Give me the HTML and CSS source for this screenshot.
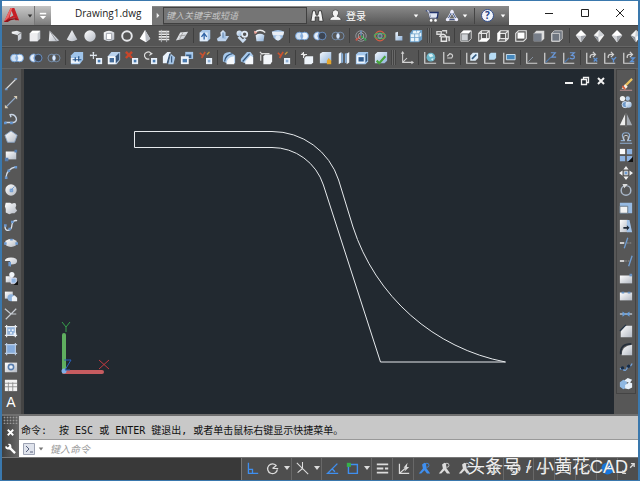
FILE: index.html
```html
<!DOCTYPE html>
<html lang="zh-CN">
<head>
<meta charset="utf-8">
<meta name="viewport" content="width=device-width, initial-scale=1">
<title>Drawing1.dwg</title>
<link rel="stylesheet" href="styles.css">
</head>
<body>
<svg class="sprite" aria-hidden="true">
  <defs>
    <linearGradient id="g" x1="0" y1="0" x2="1" y2="1"><stop offset="0" stop-color="#fff"/><stop offset="1" stop-color="#b4bac4"/></linearGradient>
    <linearGradient id="gb" x1="0" y1="0" x2="1" y2="1"><stop offset="0" stop-color="#f2f7fc"/><stop offset="1" stop-color="#8eb2da"/></linearGradient>
  </defs>
  <symbol id="polysolid" viewBox="0 0 16 16"><path d="M2 3l6-1 5 2v7l-4 3V7L2 5z" fill="url(#g)"/><path d="M9 7l4-3" stroke="#777"/></symbol>
  <symbol id="box" viewBox="0 0 16 16"><path d="M2 5l3-3h9v9l-3 3H2z" fill="#c3c7cd"/><path d="M2 5h9v9H2z" fill="#ededf0"/><path d="M2 5l3-3h9l-3 3z" fill="#fff"/></symbol>
  <symbol id="wedge" viewBox="0 0 16 16"><path d="M3 2l11 11-3 1H2z" fill="url(#g)"/><path d="M3 2l8 12" stroke="#8a8d92"/></symbol>
  <symbol id="cone" viewBox="0 0 16 16"><path d="M8 1l6 11q-6 4-12 0z" fill="url(#g)"/></symbol>
  <symbol id="sphere" viewBox="0 0 16 16"><circle cx="8" cy="8" r="6.5" fill="url(#g)"/></symbol>
  <symbol id="cyl" viewBox="0 0 16 16"><path d="M2 4q6-4 12 0v8q-6 4-12 0z" fill="url(#g)"/><path d="M5 5h6v7H5z" fill="#fff" stroke="#989ca5"/></symbol>
  <symbol id="torus" viewBox="0 0 16 16"><circle cx="8" cy="8" r="5.5" fill="none" stroke="#e6e8eb" stroke-width="2.2"/></symbol>
  <symbol id="pyramid" viewBox="0 0 16 16"><path d="M8 1l6 10-5 4-7-4z" fill="#fff"/><path d="M8 1l6 10-5 4z" fill="#b9bdc4"/></symbol>
  <symbol id="helix" viewBox="0 0 16 16"><path d="M2 3h12M2 6h12M2 9h12M2 12h12" stroke="#e8e8e8" stroke-width="1.8"/><path d="M5 1v14M11 2v13" stroke="#b7babf"/></symbol>
  <symbol id="plane" viewBox="0 0 16 16"><path d="M6 4l9-1-5 8-9 2z" fill="url(#g)"/><path d="M5 8l7-1M9 4l-4 8" stroke="#999"/></symbol>
  <symbol id="extrude" viewBox="0 0 16 16"><path d="M2 4l3-3h9v10l-3 3H2z" fill="#a9c7e8"/><path d="M2 4h9v10H2z" fill="#e0ecf9"/><path d="M7 12V6M4 9l3-4 3 4" stroke="#2e62a5" stroke-width="1.5" fill="none"/></symbol>
  <symbol id="presspull" viewBox="0 0 16 16"><path d="M1 11l4-3h10l-4 6H2z" fill="#bcd2ec"/><path d="M5 4l3-3 3 3v7H6z" fill="url(#gb)"/><path d="M8 10V4" stroke="#426c9e"/></symbol>
  <symbol id="sweep" viewBox="0 0 16 16"><circle cx="5" cy="5" r="3.2" fill="url(#gb)"/><circle cx="11" cy="6" r="3" fill="none" stroke="#e0eaf5" stroke-width="2"/><path d="M4 9l5 5 3-3" fill="none" stroke="#c9dbef" stroke-width="3"/></symbol>
  <symbol id="revolve" viewBox="0 0 16 16"><path d="M2 4q6-5 12 0" fill="none" stroke="#ececec" stroke-width="1.6"/><path d="M3 7q5-3 10 0l-1 7H4z" fill="url(#gb)"/><path d="M1 2l1 4 3-2" fill="#f2a59a"/></symbol>
  <symbol id="loft" viewBox="0 0 16 16"><path d="M1 3q7-4 14 0l-2 7q-5 6-10 0z" fill="#9ebfe3"/><path d="M1 3h14l-1 4H2z" fill="#e9eef5"/><circle cx="8" cy="10" r="3" fill="#dfeaf6"/></symbol>
  <symbol id="union" viewBox="0 0 16 16"><circle cx="5" cy="8" r="4.4" fill="#cfe0f3" stroke="#6da0dc"/><circle cx="11" cy="8" r="4.4" fill="#eff5fb" stroke="#6da0dc"/><path d="M8 5q-3 3 0 6 3-3 0-6" fill="#89aedb"/></symbol>
  <symbol id="subtract" viewBox="0 0 16 16"><circle cx="10.500" cy="8" r="4.400" fill="#3d4552" stroke="#6b95cb"/><path d="M7 3.800a4.500 4.500 0 1 0 0 8.400q-3-4 0-8.400" fill="#e4edf8" stroke="#7aa7e0"/></symbol>
  <symbol id="intersect" viewBox="0 0 16 16"><circle cx="5.500" cy="8" r="4.400" fill="none" stroke="#7893b6"/><circle cx="10.500" cy="8" r="4.400" fill="none" stroke="#7893b6"/><path d="M8 4.500q-3.500 3.500 0 7 3.500-3.500 0-7" fill="#dcebff"/></symbol>
  <symbol id="move3d" viewBox="0 0 16 16"><circle cx="8" cy="8" r="6" fill="none" stroke="#989da4"/><path d="M8 8V2" stroke="#6292ce" stroke-width="1.5"/><path d="M8 8l-6 5" stroke="#c95449" stroke-width="2"/><path d="M8 8l6 5" stroke="#38a153" stroke-width="2"/><path d="M5 6l3-2 3 2v4l-3 2-3-2z" fill="none" stroke="#aaa"/></symbol>
  <symbol id="rotate3d" viewBox="0 0 16 16"><circle cx="8" cy="8" r="5.500" fill="none" stroke="#d95b43" stroke-width="1.500"/><ellipse cx="8" cy="8" rx="6.500" ry="3" fill="none" stroke="#53a75f" stroke-width="1.300"/><circle cx="8" cy="8" r="2.400" fill="#526274" stroke="#94aac0"/></symbol>
  <symbol id="lshape" viewBox="0 0 16 16"><path d="M5 4l3-1v5h5v5H5z" fill="url(#gb)"/></symbol>
  <symbol id="array3d" viewBox="0 0 16 16"><path d="M1 5l3-4h11v11l-4 3H1z" fill="#6ca1cb"/><path d="M2 6h4v3H2zM7 6h4v3H7zM2 10h4v4H2zM7 10h4v4H7zM5 2h3v3H4zM9 2h4l-2 3H8zM12 5l2-1v4l-2 1z" fill="#e7f3fa"/></symbol>
  <symbol id="views" viewBox="0 0 16 16"><path d="M1 3h5v3H1zM7 2h5v3" fill="none" stroke="#d7d7d7" stroke-width="1.500"/><path d="M4 9q4-6 8 0v5H6V9h9v5" fill="none" stroke="#e5e5e5" stroke-width="1.600"/></symbol>
  <symbol id="vtop" viewBox="0 0 16 16"><path d="M2 5l3-3h9v9l-3 3H2z" fill="#5b5d60" stroke="#ddd"/><path d="M2 5l3-3h9l-3 3z" fill="#fff"/><path d="M3 6h7v7H3z" fill="#cdd0d4"/></symbol>
  <symbol id="vbottom" viewBox="0 0 16 16"><path d="M2 5l3-3h9v9l-3 3H2zM2 5h9v9M11 5l3-3M5 2v9h9" fill="none" stroke="#e6e6e6" stroke-width="1.300"/><path d="M2 14l3-3h9l-3 3z" fill="#fff"/></symbol>
  <symbol id="vleft" viewBox="0 0 16 16"><path d="M2 5l3-3h9v9l-3 3H2zM2 5h9v9M11 5l3-3M5 11h9" fill="none" stroke="#e6e6e6" stroke-width="1.300"/><path d="M2 5l3-3v9l-3 3z" fill="#fff"/></symbol>
  <symbol id="vright" viewBox="0 0 16 16"><path d="M2 5l3-3h9v9l-3 3H2z" fill="none" stroke="#e6e6e6" stroke-width="1.300"/><path d="M4 4h8v7H4z" fill="#fff"/></symbol>
  <symbol id="vfront" viewBox="0 0 16 16"><path d="M2 5l3-3h9v9l-3 3H2z" fill="#dedede"/><path d="M2 5h9v9H2z" fill="#777e89"/></symbol>
  <symbol id="vback" viewBox="0 0 16 16"><path d="M2 5l3-3h9v9l-3 3H2z" fill="#6f7680" stroke="#c9c9c9"/><path d="M2 5h9v9H2z" fill="none" stroke="#d7d7d7"/></symbol>
  <symbol id="iso" viewBox="0 0 16 16"><path d="M8 1l6 6-6 8-6-8z" fill="#fff"/><path d="M8 8l6-1-6 8z" fill="#a0a4ab"/><path d="M2 7l6 1v7z" fill="#cfd1d5"/></symbol>
  <symbol id="isob" viewBox="0 0 16 16"><path d="M8 1l6 6-6 8-6-8z" fill="#f4f4f4"/><path d="M8 1l6 6-7 2z" fill="#cdd0d4"/><path d="M2 7l5 2 1 6z" fill="#8f949c"/></symbol>
  <symbol id="exface" viewBox="0 0 16 16"><path d="M1 5l4-4h10v9l-4 5H1z" fill="#9fc4ea"/><path d="M1 8h10v6H1z" fill="#ecf3fb"/><path d="M3 10h10M6 7v5M10 6v6" stroke="#24548b" stroke-width="1.400"/></symbol>
  <symbol id="moveface" viewBox="0 0 16 16"><path d="M5 1v8M1 5h8M4 2h2M2 4v2M8 4v2" stroke="#dfe6ee" stroke-width="1.300"/><path d="M8 8h7v7H8z" fill="#e7f0fa"/><path d="M10 10h3v3h-3z" fill="#487aaf"/></symbol>
  <symbol id="offface" viewBox="0 0 16 16"><path d="M1 6l4-5h10v9l-4 5H1z" fill="#bad3ee"/><path d="M1 6h9v9H1z" fill="#f4f8fc"/><path d="M3 8h5v5H3z" fill="#456d9c"/><path d="M10 6l4-4v8l-4 4z" fill="#385578"/></symbol>
  <symbol id="delface" viewBox="0 0 16 16"><path d="M1 1l7 7M8 1L1 8" stroke="#c8472b" stroke-width="2.800"/><path d="M8 8h7v7H8z" fill="#e7f0fa"/><path d="M10 10h3v3h-3z" fill="#487aaf"/></symbol>
  <symbol id="rotface" viewBox="0 0 16 16"><path d="M8 3A4 4 0 1 0 6 9M6 1l3 2-3 2" fill="none" stroke="#dfdfdf" stroke-width="1.300"/><path d="M8 8h7v7H8z" fill="#e7f0fa"/><path d="M10 10h3v3h-3z" fill="#487aaf"/></symbol>
  <symbol id="taper" viewBox="0 0 16 16"><path d="M1 6l5-5h4L6 14H1z" fill="#eaf2fb"/><path d="M10 3l5 4-2 8H7z" fill="#a7c6e7"/><path d="M9 3L6 14M11 6v7" stroke="#36577d" stroke-width="1.300"/></symbol>
  <symbol id="copyface" viewBox="0 0 16 16"><path d="M6 1h9v8H6z" fill="#a7c9ed"/><path d="M7 4h6v4H7z" fill="#39608b"/><path d="M1 6h9v9H1z" fill="#eff5fc"/><path d="M3 9h5v4H3z" fill="#4c7cb0"/></symbol>
  <symbol id="colface" viewBox="0 0 16 16"><path d="M1 2l4 4M7 1L3 8" stroke="#c9522f" stroke-width="2"/><path d="M9 4l3-3" stroke="#c99a3c" stroke-width="1.500"/><path d="M8 8h7v7H8z" fill="#e7f0fa"/><path d="M10 10h3v3h-3z" fill="#8fb1d6"/></symbol>
  <symbol id="filedge" viewBox="0 0 16 16"><path d="M1 8q0-7 8-7l6 4v9H6L1 12z" fill="#a8c9eb"/><path d="M5 15q0-8 9-9v9z" fill="#f5f8fc"/><path d="M3 12q1-8 9-9" fill="none" stroke="#34557a" stroke-width="1.500"/></symbol>
  <symbol id="chaedge" viewBox="0 0 16 16"><path d="M1 9l7-8h4l3 4v9H6L1 12z" fill="#a8c9eb"/><path d="M6 12l6-7 3 2v8H6z" fill="#f5f8fc"/><path d="M3 12l8-9" stroke="#34557a" stroke-width="1.500"/></symbol>
  <symbol id="copyedge" viewBox="0 0 16 16"><path d="M1 1l3 3M2 4v7M3 3h9" stroke="#ddd" stroke-width="1.300"/><path d="M5 6l2-2h8v8l-2 3H5z" fill="#f2f5f9"/></symbol>
  <symbol id="imprint" viewBox="0 0 16 16"><path d="M5 8l2-2h8v7l-2 2H5z" fill="#edf3f9"/><path d="M1 4h7M4 1v7M2 2l4 4" stroke="#e7e7e7" stroke-width="1.200"/></symbol>
  <symbol id="clean" viewBox="0 0 16 16"><path d="M1 3l3-2h10v10l-3 3H1z" fill="url(#gb)"/><path d="M11 8l3 3v4H9v-4z" fill="#e5a72e"/></symbol>
  <symbol id="separate" viewBox="0 0 16 16"><path d="M2 3l3-2v12l-3 2zM11 3l3-2v12l-3 2z" fill="#e7f0f9"/><path d="M5 2l2 1v10l-2 1zM9 3l2-1v11l-2 1z" fill="#84add8"/></symbol>
  <symbol id="shell" viewBox="0 0 16 16"><path d="M1 4l3-3h11v11l-3 3H1z" fill="#a4c8ee"/><path d="M2 5h9v9H2z" fill="#edf5fd"/><path d="M4 7h6v5H4z" fill="#2f5c90"/><path d="M12 4l2-2v9l-2 2z" fill="#365679"/></symbol>
  <symbol id="check" viewBox="0 0 16 16"><path d="M1 4l3-3h11v10l-3 3H1z" fill="url(#gb)"/><path d="M3 11l3 3 7-8" fill="none" stroke="#49a43e" stroke-width="2.500"/></symbol>
  <symbol id="ucs" viewBox="0 0 16 16"><path d="M3 1v12h12M3 13l5-5" fill="none" stroke="#d2d2d2" stroke-width="1.200"/><path d="M1 3l2-3 2 3M13 11l3 2-3 2" fill="#d2d2d2"/></symbol>
  <symbol id="ucsworld" viewBox="0 0 16 16"><path d="M2 1v13h13" fill="none" stroke="#d2d2d2" stroke-width="1.400"/><circle cx="9" cy="7" r="5" fill="#6bb6c9"/><path d="M6 4l4-1 2 3-4 1zM9 9l3-1-1 3z" fill="#d5eff5"/></symbol>
  <symbol id="ucsprev" viewBox="0 0 16 16"><path d="M2 1v13h13M6 8h5q3-4-2-5L6 6" fill="none" stroke="#d2d2d2" stroke-width="1.400"/></symbol>
  <symbol id="ucsface" viewBox="0 0 16 16"><path d="M2 2v12h12" fill="none" stroke="#d2d2d2" stroke-width="1.400"/><path d="M6 5l3-3h6v6l-3 3H6z" fill="#dcecf9"/><path d="M8 9l5-5" stroke="#325a80" stroke-width="2"/></symbol>
  <symbol id="ucsobj" viewBox="0 0 16 16"><path d="M2 2v12h12" fill="none" stroke="#d2d2d2" stroke-width="1.400"/><path d="M7 4l2-2h6v6l-2 2H7z" fill="#b7dcf5"/></symbol>
  <symbol id="ucsview" viewBox="0 0 16 16"><path d="M2 2v12h12" fill="none" stroke="#d2d2d2" stroke-width="1.400"/><path d="M5 4h10v6H5z" fill="#4688bd" stroke="#d9ebf8"/></symbol>
  <symbol id="ucsz" viewBox="0 0 16 16"><path d="M2 2v12h12" fill="none" stroke="#d2d2d2" stroke-width="1.400"/><path d="M3 13l6-6" stroke="#4f79ad" stroke-width="1.500"/><path d="M9 2h5l-4 5h5" fill="none" stroke="#6a98d8" stroke-width="1.400"/></symbol>
  <symbol id="ucs3" viewBox="0 0 16 16"><path d="M2 2v12h12" fill="none" stroke="#d2d2d2" stroke-width="1.400"/><path d="M3 13l5-5" stroke="#4f79ad" stroke-width="1.500"/><path d="M9 2h5l-3 3q4 0 3 3-2 2-5 0" fill="none" stroke="#6a98d8" stroke-width="1.400"/></symbol>
  <symbol id="ucsorg" viewBox="0 0 16 16"><path d="M2 2v12h12" fill="none" stroke="#d2d2d2" stroke-width="1.400"/><path d="M4 12l5-5" stroke="#a9bfd6" stroke-dasharray="2 1"/></symbol>
  <symbol id="ucsrot" viewBox="0 0 16 16"><path d="M2 2v12h12M6 8q-1-5 5-4M9 1l3 3-3 3" fill="none" stroke="#d2d2d2" stroke-width="1.400"/><path d="M10 8l4 4M14 8l-4 4" stroke="#5d92d6" stroke-width="1.500"/></symbol>
  <symbol id="ucsroty" viewBox="0 0 16 16"><path d="M2 2v12h12M6 8q-1-5 5-4M9 1l3 3-3 3" fill="none" stroke="#d2d2d2" stroke-width="1.400"/><path d="M10 8l2 2 3-3M12 10v3" fill="none" stroke="#5d92d6" stroke-width="1.500"/></symbol>
  <symbol id="ucsrotz" viewBox="0 0 16 16"><path d="M2 2v12h12M6 8q-1-5 5-4M9 1l3 3-3 3" fill="none" stroke="#d2d2d2" stroke-width="1.400"/><path d="M10 8h4l-4 4h4" fill="none" stroke="#5d92d6" stroke-width="1.500"/></symbol>
  <symbol id="line" viewBox="0 0 16 16"><path d="M2 14L14 2" stroke="#ddd" stroke-width="1.300"/><path d="M1 13h3v2H1zM12 1h3v2h-3z" fill="#6d95c6"/></symbol>
  <symbol id="xline" viewBox="0 0 16 16"><path d="M2 14L14 2" stroke="#8fa9c8" stroke-width="1.300"/><path d="M1 11v4h4zM11 1h4v4z" fill="#d9cdb5"/></symbol>
  <symbol id="pline" viewBox="0 0 16 16"><path d="M1 12h10q4-1 3-5-2-5-7-4l1 3" fill="none" stroke="#c9d5e5" stroke-width="1.600"/><path d="M0 11h3v3H0zM7 11h3v3H7z" fill="#6195d2"/></symbol>
  <symbol id="polygon" viewBox="0 0 16 16"><path d="M8 1l7 5-3 8H4L1 6z" fill="url(#g)" stroke="#8aa6c8"/></symbol>
  <symbol id="rect" viewBox="0 0 16 16"><path d="M2 4h12v9H2z" fill="url(#g)"/><path d="M1 11h4v4H1zM12 2h3v3h-3z" fill="#557daf"/></symbol>
  <symbol id="arc" viewBox="0 0 16 16"><path d="M2 15Q3 4 14 2" fill="none" stroke="#d2dbe6" stroke-width="1.500"/><path d="M1 13h3v3H1zM4 5h3v3H4zM12 1h3v3h-3z" fill="#6a98d0"/></symbol>
  <symbol id="circle" viewBox="0 0 16 16"><circle cx="8" cy="8" r="6.500" fill="url(#g)"/><path d="M8 8l4-4M7 7h3v3H7z" stroke="#6a98d0" fill="#8ab0dd"/></symbol>
  <symbol id="cloud" viewBox="0 0 16 16"><path d="M2 2h5l2 1q5-2 5 2l-1 3 2 3-3 3H9l-3 1-4-2V9L1 6z" fill="url(#g)"/></symbol>
  <symbol id="spline" viewBox="0 0 16 16"><path d="M1 8q0 7 4 6 4-1 4-6 1-6 6-5" fill="none" stroke="#d9e1eb" stroke-width="1.500"/><path d="M0 7h3v3H0zM5 11h3v3H5zM8 3h3v3H8z" fill="#6a98d0"/></symbol>
  <symbol id="ellipse" viewBox="0 0 16 16"><ellipse cx="8" cy="8" rx="7" ry="4.500" fill="url(#g)"/><path d="M0 7h3v3H0zM13 7h3v3h-3zM7 3h3v2H7z" fill="#6a98d0"/></symbol>
  <symbol id="earc" viewBox="0 0 16 16"><path d="M1 8q0-4 7-4t7 4-7 4l-1 3V8z" fill="url(#g)"/><path d="M5 9h3v5H5z" fill="#6a98d0"/></symbol>
  <symbol id="insert" viewBox="0 0 16 16"><path d="M2 6h8v7H2z" fill="url(#g)"/><circle cx="9" cy="4" r="3" fill="#f1f4f8"/><path d="M8 8h6v6H8z" fill="#91b5df" stroke="#eef"/><path d="M16 11v5h-5z" fill="#111"/></symbol>
  <symbol id="block" viewBox="0 0 16 16"><path d="M1 3h9v8H1z" fill="url(#g)"/><circle cx="8" cy="10" r="4" fill="#8cb1dc"/><path d="M9 9l3-2 3 3v4H9z" fill="#eef3f8"/></symbol>
  <symbol id="point" viewBox="0 0 16 16"><path d="M1 2l7 6h6M14 2L2 14" fill="none" stroke="#c6cbd1" stroke-width="1.400"/></symbol>
  <symbol id="hatch" viewBox="0 0 16 16"><path d="M3 3h10v10H3z" fill="#93b3da"/><path d="M1 3h14M1 13h14M3 1v14M13 1v14" stroke="#e8ecf1" stroke-width="1.300"/><path d="M5 6h2v2H5zM9 6h2v2H9zM7 9h2v2H7zM11 10h3v4h-3z" fill="#eef4fc"/></symbol>
  <symbol id="grad" viewBox="0 0 16 16"><path d="M3 3h10v10H3z" fill="#86acdc"/><path d="M1 3h14M1 13h14M3 1v14M13 1v14" stroke="#b9cce4" stroke-width="1.300"/></symbol>
  <symbol id="region" viewBox="0 0 16 16"><path d="M1 3h14v11H1z" fill="url(#g)"/><circle cx="8" cy="8" r="3" fill="#e9f1fb" stroke="#587dad" stroke-width="1.800"/></symbol>
  <symbol id="table" viewBox="0 0 16 16"><path d="M1 2h14v13H1z" fill="#f2f2f2"/><path d="M1 6h14M1 10h14M5 5v10M10 5v10" stroke="#8b8b8b"/></symbol>
  <symbol id="erase" viewBox="0 0 16 16"><path d="M15 1L7 9" stroke="#e9c15f" stroke-width="2.500"/><path d="M7 7l3 3-3 3-4-1z" fill="#f7eee4"/><path d="M4 9l3 4" stroke="#d5603c" stroke-width="2"/><path d="M1 14h14" stroke="#c99"/></symbol>
  <symbol id="copy" viewBox="0 0 16 16"><circle cx="4" cy="4" r="3" fill="#f3f3f3"/><circle cx="10" cy="4" r="2.500" fill="#a9c4e3"/><circle cx="7" cy="11" r="3.500" fill="#6e99ca" stroke="#dce7f3"/><circle cx="11" cy="11" r="3.500" fill="url(#gb)"/></symbol>
  <symbol id="mirror" viewBox="0 0 16 16"><path d="M7 1v13H1z" fill="#eee"/><path d="M9 1v13h6z" fill="#a2a8b0"/><path d="M8 0v16" stroke="#777"/></symbol>
  <symbol id="offset" viewBox="0 0 16 16"><path d="M1 14h14M2 11h4Q1 2 8 2t2 9h4" fill="none" stroke="#8eaed2" stroke-width="1.400"/><path d="M6 11q-2-6 2-6t2 6" fill="none" stroke="#ddd"/></symbol>
  <symbol id="array" viewBox="0 0 16 16"><path d="M1 1h6v6H1z" fill="#fafafa"/><path d="M9 1h6v6H9zM1 9h6v6H1zM9 9h6v6H9z" fill="#8cb1df"/><path d="M16 10v6h-6z" fill="#111"/></symbol>
  <symbol id="move" viewBox="0 0 16 16"><path d="M8 0l3 4H5zM8 16l3-4H5zM0 8l4-3v6zM16 8l-4-3v6z" fill="#f0f0f0"/><path d="M6 6h4v4H6z" fill="#6e9dd5" stroke="#ddd"/></symbol>
  <symbol id="rotate" viewBox="0 0 16 16"><circle cx="8" cy="8.500" r="5.500" fill="none" stroke="#a9b7c8" stroke-width="1.700"/><path d="M4 1h6L6 6z" fill="#ddd"/></symbol>
  <symbol id="scale" viewBox="0 0 16 16"><path d="M1 2h14v12H1z" fill="#97bae2"/><path d="M1 6h9v8H1z" fill="#f3f3f3" stroke="#61717f"/></symbol>
  <symbol id="stretch" viewBox="0 0 16 16"><path d="M1 1h9v14H1z" fill="url(#g)"/><path d="M9 1h3l3 14H9z" fill="#9fc0e6"/><path d="M5 9h4V7l3 3-3 3v-2H5z" fill="#202b39"/></symbol>
  <symbol id="trim" viewBox="0 0 16 16"><path d="M1 8h5" stroke="#ddd" stroke-width="2"/><path d="M9 8h6" stroke="#999" stroke-dasharray="2 1"/><path d="M6 14l4-12" stroke="#6f9dd3" stroke-width="1.500"/></symbol>
  <symbol id="extend" viewBox="0 0 16 16"><path d="M1 8h5" stroke="#ddd" stroke-width="2"/><path d="M7 8h6" stroke="#999" stroke-dasharray="2 1"/><path d="M11 14l4-12" stroke="#6f9dd3" stroke-width="1.500"/></symbol>
  <symbol id="break1" viewBox="0 0 16 16"><path d="M1 4h14v9H1z" fill="url(#g)"/><path d="M12 2h3v3h-3z" fill="#6993c4"/></symbol>
  <symbol id="break2" viewBox="0 0 16 16"><path d="M1 4h14v9H1z" fill="url(#g)"/><path d="M3 3h3v2H3zM10 3h3v2h-3z" fill="#6993c4"/></symbol>
  <symbol id="join" viewBox="0 0 16 16"><path d="M1 8h14" stroke="#cbd5e0" stroke-width="1.400"/><path d="M4 5l4 3-4 3zM12 5L8 8l4 3z" fill="#679edb"/></symbol>
  <symbol id="chamfer" viewBox="0 0 16 16"><path d="M7 2h8v13H2V8z" fill="url(#g)"/><path d="M1 8l7-7" stroke="#263547" stroke-width="1.600"/></symbol>
  <symbol id="fillet" viewBox="0 0 16 16"><path d="M3 15q0-11 12-12v12z" fill="url(#g)"/><path d="M2 14Q1 2 14 2" fill="none" stroke="#262f3b" stroke-width="2"/></symbol>
  <symbol id="blend" viewBox="0 0 16 16"><path d="M1 10h3q4 5 6-3 2 3 5-3" fill="none" stroke="#75a3da" stroke-width="1.500"/><circle cx="4" cy="9" r="2" fill="#172d49"/><circle cx="11" cy="7" r="2" fill="#172d49"/></symbol>
  <symbol id="explode" viewBox="0 0 16 16"><path d="M1 6l4-3 4 2v7l-4 2-4-3z" fill="#8fb8e2"/><path d="M6 4l4-3 5 2-3 4zM7 9l5-3 3 1v5l-4 2-4-1z" fill="#e7f0f9"/></symbol>
  <symbol id="caret" viewBox="0 0 8 8"><path d="M1 2h6L4 6z" fill="currentColor"/></symbol>
  <symbol id="person" viewBox="0 0 16 16"><path d="M8 1l2 1v5l5 7h-4L8 10l-4 4H1l5-6-1-5z" fill="currentColor"/><circle cx="11" cy="4" r="2.500" fill="none" stroke="currentColor"/></symbol>
</svg>

<div class="window">
  <header class="titlebar">
    <button class="app" aria-label="应用程序菜单">
      <svg class="logo" viewBox="0 0 18 18"><path d="M1 16L8 1h4l5 13h-4l-1-3-6 2-1 3z" fill="#c62026"/><path d="M8 1h2L6 11l-5 5z" fill="#ec6867"/><path d="M9 4l2 5-4 2z" fill="#b8b8b8"/><path d="M1 16q5-5 13-4l3 2q-8-2-12 2z" fill="#8f1219"/></svg>
      <svg class="caret dark"><use href="#caret"/></svg>
    </button>
    <button class="quick" aria-label="自定义快速访问工具栏"><svg viewBox="0 0 10 10"><path d="M1 2h8" stroke="#fff" stroke-width="2"/><path d="M1 5h8L5 9z" fill="#fff"/></svg></button>
    <h1 class="doc">Drawing1.dwg</h1>
    <div class="info">
      <button class="expand" aria-label="展开"><svg viewBox="0 0 6 8"><path d="M1 0l4 4-4 4z" fill="#eee"/></svg></button>
      <input class="search" type="text" placeholder="键入关键字或短语" aria-label="搜索">
      <button class="tool find" aria-label="查找"><svg viewBox="0 0 16 16"><path d="M3 2h3l1 5h2l1-5h3l2 12h-5V9H6v5H1z" fill="#f3f3f3" stroke="#333"/></svg></button>
      <button class="login"><svg viewBox="0 0 16 16"><path d="M8 1q4 0 4 4-1 3-2 4 5 1 5 5H1q0-4 5-5-2-1-2-4 0-4 4-4z" fill="#f3f3f3" stroke="#444"/></svg>登录</button>
      <button class="mini push" aria-label="登录选项"><svg class="caret"><use href="#caret"/></svg></button>
      <button class="tool cart" aria-label="购物车"><svg viewBox="0 0 16 16"><path d="M1 2h3l2 8h8l1-6H5" fill="#dfe6f4" stroke="#22336b" stroke-width="1.500"/><path d="M2 2h2l2 8h7" fill="none" stroke="#fff"/><circle cx="7" cy="13" r="1.500" fill="#fff"/><circle cx="12" cy="13" r="1.500" fill="#fff"/></svg></button>
      <button class="tool" aria-label="A360"><svg viewBox="0 0 16 16"><path d="M8 3l5 9H3z" fill="none" stroke="#e5ebf7" stroke-width="2.500"/><path d="M8 3l5 9H3z" fill="none" stroke="#293d79"/><circle cx="8" cy="3" r="2" fill="#eef"/><circle cx="3" cy="12" r="2" fill="#eef"/><circle cx="13" cy="12" r="2" fill="#eef"/></svg></button>
      <button class="mini" aria-label="A360 选项"><svg class="caret"><use href="#caret"/></svg></button>
      <i class="rule"></i>
      <button class="help" aria-label="帮助">?</button>
      <button class="mini" aria-label="帮助选项"><svg class="caret"><use href="#caret"/></svg></button>
    </div>
    <div class="winctl">
      <button aria-label="最小化"><svg viewBox="0 0 10 10"><path d="M1 5.500h8"/></svg></button>
      <button aria-label="最大化"><svg viewBox="0 0 10 10"><path d="M1.500 1.500h7v7h-7z"/></svg></button>
      <button aria-label="关闭"><svg viewBox="0 0 10 10"><path d="M1 1l8 8M9 1L1 9"/></svg></button>
    </div>
  </header>

  <nav class="bar modeling" aria-label="建模">
    <button aria-label="多段体"><svg><use href="#polysolid"/></svg></button>
    <button aria-label="长方体"><svg><use href="#box"/></svg></button>
    <button aria-label="楔体"><svg><use href="#wedge"/></svg></button>
    <button aria-label="圆锥体"><svg><use href="#cone"/></svg></button>
    <button aria-label="球体"><svg><use href="#sphere"/></svg></button>
    <button aria-label="圆柱体"><svg><use href="#cyl"/></svg></button>
    <button aria-label="圆环体"><svg><use href="#torus"/></svg></button>
    <button aria-label="棱锥体"><svg><use href="#pyramid"/></svg></button>
    <button aria-label="螺旋"><svg><use href="#helix"/></svg></button>
    <button aria-label="平面曲面"><svg><use href="#plane"/></svg></button>
    <i class="sep"></i>
    <button aria-label="拉伸"><svg><use href="#extrude"/></svg></button>
    <button aria-label="按住并拖动"><svg><use href="#presspull"/></svg></button>
    <button aria-label="扫掠"><svg><use href="#sweep"/></svg></button>
    <button aria-label="旋转"><svg><use href="#revolve"/></svg></button>
    <button aria-label="放样"><svg><use href="#loft"/></svg></button>
    <i class="sep"></i>
    <button aria-label="并集"><svg><use href="#union"/></svg></button>
    <button aria-label="差集"><svg><use href="#subtract"/></svg></button>
    <button aria-label="交集"><svg><use href="#intersect"/></svg></button>
    <i class="sep"></i>
    <button aria-label="三维移动"><svg><use href="#move3d"/></svg></button>
    <button aria-label="三维旋转"><svg><use href="#rotate3d"/></svg></button>
    <button aria-label="三维对齐"><svg><use href="#lshape"/></svg></button>
    <button aria-label="三维阵列"><svg><use href="#array3d"/></svg></button>
    <i class="grip"></i>
    <button aria-label="命名视图"><svg><use href="#views"/></svg></button>
    <i class="sep"></i>
    <button aria-label="俯视"><svg><use href="#vtop"/></svg></button>
    <button aria-label="仰视"><svg><use href="#vbottom"/></svg></button>
    <button aria-label="左视"><svg><use href="#vleft"/></svg></button>
    <button aria-label="右视"><svg><use href="#vright"/></svg></button>
    <button aria-label="前视"><svg><use href="#vfront"/></svg></button>
    <button aria-label="后视"><svg><use href="#vback"/></svg></button>
    <i class="sep"></i>
    <button aria-label="西南等轴测"><svg><use href="#iso"/></svg></button>
    <button aria-label="东南等轴测"><svg><use href="#isob"/></svg></button>
    <button aria-label="东北等轴测"><svg><use href="#iso"/></svg></button>
    <button aria-label="西北等轴测"><svg><use href="#isob"/></svg></button>
  </nav>

  <nav class="bar editing" aria-label="实体编辑">
    <button aria-label="并集"><svg><use href="#union"/></svg></button>
    <button aria-label="差集"><svg><use href="#subtract"/></svg></button>
    <button aria-label="交集"><svg><use href="#intersect"/></svg></button>
    <i class="sep"></i>
    <button aria-label="拉伸面"><svg><use href="#exface"/></svg></button>
    <button aria-label="移动面"><svg><use href="#moveface"/></svg></button>
    <button aria-label="偏移面"><svg><use href="#offface"/></svg></button>
    <button aria-label="删除面"><svg><use href="#delface"/></svg></button>
    <button aria-label="旋转面"><svg><use href="#rotface"/></svg></button>
    <button aria-label="倾斜面"><svg><use href="#taper"/></svg></button>
    <button aria-label="复制面"><svg><use href="#copyface"/></svg></button>
    <button aria-label="着色面"><svg><use href="#colface"/></svg></button>
    <i class="sep"></i>
    <button aria-label="圆角边"><svg><use href="#filedge"/></svg></button>
    <button aria-label="倒角边"><svg><use href="#chaedge"/></svg></button>
    <button aria-label="复制边"><svg><use href="#copyedge"/></svg></button>
    <button aria-label="着色边"><svg><use href="#colface"/></svg></button>
    <i class="sep"></i>
    <button aria-label="压印"><svg><use href="#imprint"/></svg></button>
    <button aria-label="清除"><svg><use href="#clean"/></svg></button>
    <button aria-label="分割"><svg><use href="#separate"/></svg></button>
    <button aria-label="抽壳"><svg><use href="#shell"/></svg></button>
    <button aria-label="检查"><svg><use href="#check"/></svg></button>
    <i class="grip"></i>
    <button aria-label="UCS"><svg><use href="#ucs"/></svg></button>
    <i class="sep"></i>
    <button aria-label="世界"><svg><use href="#ucsworld"/></svg></button>
    <button aria-label="上一个 UCS"><svg><use href="#ucsprev"/></svg></button>
    <i class="sep"></i>
    <button aria-label="面 UCS"><svg><use href="#ucsface"/></svg></button>
    <button aria-label="对象"><svg><use href="#ucsobj"/></svg></button>
    <button aria-label="视图"><svg><use href="#ucsview"/></svg></button>
    <i class="sep"></i>
    <button aria-label="原点"><svg><use href="#ucsorg"/></svg></button>
    <button aria-label="Z 轴矢量"><svg><use href="#ucsz"/></svg></button>
    <button aria-label="三点"><svg><use href="#ucs3"/></svg></button>
    <i class="sep"></i>
    <button aria-label="绕 X 轴"><svg><use href="#ucsrot"/></svg></button>
    <button aria-label="绕 Y 轴"><svg><use href="#ucsroty"/></svg></button>
    <button aria-label="绕 Z 轴"><svg><use href="#ucsrotz"/></svg></button>
  </nav>

  <main class="work">
    <nav class="side left" aria-label="绘图">
      <button aria-label="直线"><svg><use href="#line"/></svg></button>
      <button aria-label="构造线"><svg><use href="#xline"/></svg></button>
      <button aria-label="多段线"><svg><use href="#pline"/></svg></button>
      <button aria-label="多边形"><svg><use href="#polygon"/></svg></button>
      <button aria-label="矩形"><svg><use href="#rect"/></svg></button>
      <button aria-label="圆弧"><svg><use href="#arc"/></svg></button>
      <button aria-label="圆"><svg><use href="#circle"/></svg></button>
      <button aria-label="修订云线"><svg><use href="#cloud"/></svg></button>
      <button aria-label="样条曲线"><svg><use href="#spline"/></svg></button>
      <button aria-label="椭圆"><svg><use href="#ellipse"/></svg></button>
      <button aria-label="椭圆弧"><svg><use href="#earc"/></svg></button>
      <button aria-label="插入块"><svg><use href="#insert"/></svg></button>
      <button aria-label="创建块"><svg><use href="#block"/></svg></button>
      <button aria-label="点"><svg><use href="#point"/></svg></button>
      <button aria-label="图案填充"><svg><use href="#hatch"/></svg></button>
      <button aria-label="渐变色"><svg><use href="#grad"/></svg></button>
      <button aria-label="面域"><svg><use href="#region"/></svg></button>
      <button aria-label="表格"><svg><use href="#table"/></svg></button>
      <button class="text-tool" aria-label="多行文字">A</button>
    </nav>

    <section class="canvas" aria-label="绘图区">
      <svg class="drawing" viewBox="24 69 590 344" preserveAspectRatio="xMinYMin meet">
        <path class="stroke" d="M272 131.500H134.500V147.500H272A54 54 0 0 1 323.400 185L380.500 362H505.500A200 200 0 0 1 353 227L338.600 180A70 70 0 0 0 272 131.500"/>
        <path d="M64 372V335" stroke="#5fae5f" stroke-width="4" stroke-linecap="round"/>
        <path d="M64 372H102" stroke="#c75c60" stroke-width="4" stroke-linecap="round"/>
        <circle cx="64" cy="371" r="2.500" fill="#7fb0e8"/>
        <path d="M62 322l4 5 4-5M66 327v5" stroke="#36a04a" fill="none"/>
        <path d="M99 360l10 9M109 360l-10 9" stroke="#c23a40" fill="none"/>
        <path d="M64 360h7l-6 10h5" stroke="#2a62c0" fill="none"/>
      </svg>
      <div class="mdi">
        <button aria-label="最小化视图"><svg viewBox="0 0 10 10"><path d="M1 7h8" stroke-width="2"/></svg></button>
        <button aria-label="还原视图"><svg viewBox="0 0 10 10"><path d="M1.500 3.500h5v5h-5zM3.500 3V1.500h5v5H7" stroke-width="1.300"/></svg></button>
        <button aria-label="关闭视图"><svg viewBox="0 0 10 10"><path d="M2 2l6 6M8 2L2 8" stroke-width="2"/></svg></button>
      </div>
    </section>

    <nav class="side right" aria-label="修改">
      <button aria-label="删除"><svg><use href="#erase"/></svg></button>
      <button aria-label="复制"><svg><use href="#copy"/></svg></button>
      <button aria-label="镜像"><svg><use href="#mirror"/></svg></button>
      <button aria-label="偏移"><svg><use href="#offset"/></svg></button>
      <button aria-label="阵列"><svg><use href="#array"/></svg></button>
      <button aria-label="移动"><svg><use href="#move"/></svg></button>
      <button aria-label="旋转"><svg><use href="#rotate"/></svg></button>
      <button aria-label="缩放"><svg><use href="#scale"/></svg></button>
      <button aria-label="拉伸"><svg><use href="#stretch"/></svg></button>
      <button aria-label="修剪"><svg><use href="#trim"/></svg></button>
      <button aria-label="延伸"><svg><use href="#extend"/></svg></button>
      <button aria-label="打断于点"><svg><use href="#break1"/></svg></button>
      <button aria-label="打断"><svg><use href="#break2"/></svg></button>
      <button aria-label="合并"><svg><use href="#join"/></svg></button>
      <button aria-label="倒角"><svg><use href="#chamfer"/></svg></button>
      <button aria-label="圆角"><svg><use href="#fillet"/></svg></button>
      <button aria-label="光顺曲线"><svg><use href="#blend"/></svg></button>
      <button aria-label="分解"><svg><use href="#explode"/></svg></button>
    </nav>
  </main>

  <section class="command" aria-label="命令行">
    <div class="handle">
      <i class="dots"></i>
      <button aria-label="关闭命令行"><svg viewBox="0 0 12 12"><path d="M3 3l6 6M9 3L3 9" stroke="#fff" stroke-width="2"/></svg></button>
      <button aria-label="自定义"><svg viewBox="0 0 12 12"><path d="M5 5l6 6" stroke="#fff" stroke-width="2.500"/><path d="M1 3l2 2 2-2-2-2q4-1 4 3t-4 3-2-4" fill="#fff"/></svg></button>
    </div>
    <div class="console">
      <p class="history"><span>命令:</span><span class="msg">按 ESC 或 ENTER 键退出, 或者单击鼠标右键显示快捷菜单。</span></p>
      <div class="prompt">
        <button class="recent" aria-label="最近使用的命令"><svg viewBox="0 0 12 12"><path d="M.5.500h11v11H.5z" fill="#dfe3ec" stroke="#9da3b3"/><path d="M3 3l3 3-3 3M7 9h3" fill="none" stroke="#56607c"/></svg><svg class="caret"><use href="#caret"/></svg></button>
        <input type="text" placeholder="键入命令" aria-label="键入命令">
      </div>
    </div>
  </section>

  <footer class="status">
    <div class="modes">
      <button class="on" aria-label="正交"><svg viewBox="0 0 16 16"><path d="M3 1v13h12M3 9h5v5" fill="none" stroke="currentColor" stroke-width="1.600"/></svg></button>
      <button aria-label="极轴追踪"><svg viewBox="0 0 16 16"><path d="M13 5a6 6 0 1 0 1 4M8 8h7M8 8l5-4" fill="none" stroke="currentColor" stroke-width="1.500"/></svg></button>
      <button class="drop" aria-label="极轴选项"><svg class="caret"><use href="#caret"/></svg></button>
      <button class="cell" aria-label="等轴测草图"><svg viewBox="0 0 16 16"><path d="M1 1l14 14M8 0v8M2 13l6-5" stroke="currentColor" stroke-width="1.300"/></svg></button>
      <button class="drop" aria-label="等轴测选项"><svg class="caret"><use href="#caret"/></svg></button>
      <button class="cell on" aria-label="对象捕捉追踪"><svg viewBox="0 0 16 16"><path d="M14 2L2 14h13M8 9l3 3" fill="none" stroke="currentColor" stroke-width="1.700"/></svg></button>
      <button class="on" aria-label="对象捕捉"><svg viewBox="0 0 16 16"><path d="M3 3h11v11H3z" fill="none" stroke="currentColor" stroke-width="1.700"/><path d="M1 1h5v5H1z" fill="#36b14a"/></svg></button>
      <button class="drop" aria-label="捕捉选项"><svg class="caret"><use href="#caret"/></svg></button>
      <button class="cell" aria-label="线宽"><svg viewBox="0 0 16 16"><path d="M1 3h14M1 8h8M11 8h4M1 13h14" stroke="currentColor" stroke-width="2.200"/></svg></button>
      <button class="cell" aria-label="动态 UCS"><svg viewBox="0 0 16 16"><path d="M3 2v12h12M3 14l8-7" fill="none" stroke="currentColor" stroke-width="1.500"/><path d="M13 1L8 7h3l-2 5 6-6h-3z" fill="currentColor"/></svg></button>
      <button class="cell on" aria-label="注释可见性"><svg><use href="#person"/></svg></button>
      <button aria-label="自动缩放"><svg><use href="#person"/></svg></button>
      <button aria-label="注释比例"><svg><use href="#person"/></svg></button>
      <button class="drop" aria-label="比例列表"><svg class="caret"><use href="#caret"/></svg></button>
      <button aria-label="切换工作空间"><svg viewBox="0 0 16 16"><circle cx="8" cy="8" r="5" fill="none" stroke="currentColor" stroke-width="3" stroke-dasharray="3 1"/></svg></button>
      <button class="cell" aria-label="工作空间选项"><svg viewBox="0 0 16 16"><circle cx="9" cy="8" r="5" fill="none" stroke="currentColor" stroke-width="3" stroke-dasharray="3 1"/></svg></button>
      <button class="drop" aria-label="工作空间列表"><svg class="caret"><use href="#caret"/></svg></button>
      <button class="cell" aria-label="注释监视器"><svg viewBox="0 0 16 16"><path d="M8 2v12M2 8h12" stroke="currentColor" stroke-width="2"/></svg></button>
      <button class="cell" aria-label="快捷特性"><svg viewBox="0 0 16 16"><path d="M2 3h12v10H2zM2 7h12" fill="none" stroke="currentColor"/></svg></button>
      <button class="cell" aria-label="隔离对象"><svg viewBox="0 0 16 16"><circle cx="8" cy="8" r="5" fill="none" stroke="currentColor"/></svg></button>
      <button class="cell on" aria-label="硬件加速"><svg viewBox="0 0 16 16"><circle cx="8" cy="8" r="7.500" fill="#1677df"/><path d="M5 10l6-5" stroke="#fff" stroke-width="1.500"/></svg></button>
      <button class="cell" aria-label="全屏显示"><svg viewBox="0 0 16 16"><path d="M1 10v4h4M2 13l4-4M15 6V2h-4M14 3l-4 4" fill="none" stroke="currentColor" stroke-width="1.600"/></svg></button>
    </div>
    <p class="watermark">头条号 / 小黄花CAD</p>
  </footer>
</div>
</body>
</html>
```

FILE: styles.css
```css
* { box-sizing: border-box; }

body {
  margin: 0;
  font-family: "Open Sans", "Noto Sans CJK SC", sans-serif;
  background: #fff;
}

h1, p { margin: 0; font-weight: normal; }

button {
  display: flex;
  align-items: center;
  justify-content: center;
  min-width: 0;
  padding: 0;
  border: 0;
  background: none;
  color: #fff;
  font: inherit;
}

input { min-width: 0; border: 0; padding: 0; font: inherit; }

.sprite { position: absolute; width: 0; height: 0; }

.window {
  display: flex;
  flex-direction: column;
  min-height: 100vh;
  border: 1px solid #3a78ad;
  border-right-width: 2px;
  border-left-width: 2px;
  background: #575757;
  overflow: hidden;
}

.caret { width: 6px; height: 6px; flex: none; }

/* Title bar */
.titlebar {
  display: flex;
  align-items: flex-end;
  height: 24px;
  background: #fff;
}
.app {
  gap: 7px;
  width: 32px;
  height: 19px;
  background: linear-gradient(#c6c6c6, #8c8c8c);
}
.logo { width: 17px; height: 17px; }
.dark { color: #333; }
.quick {
  width: 17px;
  height: 19px;
  border-left: 1px solid #777;
  background: linear-gradient(#c4c4c4, #7b7b7b);
}
.quick svg { width: 8px; height: 8px; }
.doc {
  width: 101px;
  padding: 0 12px 0 24px;
  font-size: 10px;
  line-height: 24px;
  color: #222;
  white-space: nowrap;
}
.info {
  display: flex;
  flex: 1;
  align-items: center;
  height: 19px;
  background: linear-gradient(#8a8a8a, #565656);
}
.expand { width: 11px; height: 18px; background: #757575; }
.expand svg { width: 4px; height: 7px; }
.search {
  width: 144px;
  height: 17px;
  padding: 0 2px;
  border: 1px solid #404040;
  background: #757575;
  color: #fff;
  font-size: 9px;
  font-style: italic;
}
.search::placeholder { color: #c6c6c6; opacity: 1; }
.tool { width: 20px; height: 18px; }
.tool svg { width: 14px; height: 14px; }
.login { gap: 4px; padding-left: 2px; font-size: 10px; line-height: 18px; }
.login svg { width: 13px; height: 13px; }
.mini { width: 6px; height: 18px; margin-right: 3px; }
.push { margin-left: auto; }
.rule { width: 1px; height: 16px; margin: 0 6px 0 3px; background: #454545; }
.help {
  width: 13px;
  height: 13px;
  margin-right: 6px;
  border: 1px solid #34508c;
  border-radius: 50%;
  background: #f2f5fb;
  color: #1f3f86;
  font-size: 10px;
  font-weight: bold;
  line-height: 11px;
}
.winctl { display: flex; width: 129px; height: 24px; padding-left: 22px; }
.winctl button { flex: 1; }
.winctl svg { width: 10px; height: 10px; fill: none; stroke: #222; }

/* Horizontal toolbars */
.bar {
  display: flex;
  height: 22px;
  padding: 0 0 1px 6px;
  border-top: 1px solid #474747;
  border-bottom: 1px solid #676767;
  background: #555;
}
.modeling { margin-right: -7px; }
.bar button { flex: 1; }
.bar svg, .side svg { width: 14px; height: 14px; flex: none; }
.sep {
  width: 5px;
  margin: 2px 0;
  background: linear-gradient(#3f3f3f, #3f3f3f) center / 1px 100% no-repeat;
}
.grip {
  width: 8px;
  margin: 2px 0;
  background: repeating-linear-gradient(90deg, #444 0 1px, #696969 1px 2px) center / 5px 100% no-repeat;
}

/* Work area */
.work { display: flex; flex: 1; }
.side { display: flex; flex-direction: column; padding-top: 6px; }
.side button { flex: 1; width: 16px; }
.left { width: 22px; padding-bottom: 3px; padding-left: 1px; border-right: 3px solid #444; }
.right {
  width: 20px;
  margin: 0 2px 20px;
  padding-left: 1px;
  border: 1px solid #444;
}
.text-tool { font-family: "Liberation Sans", sans-serif; font-size: 14px; line-height: 14px; }
.canvas { position: relative; flex: 1; background: #222930; }
.drawing { display: block; width: 100%; }
.stroke { fill: none; stroke: #e6e9ec; stroke-width: 1; }
.mdi { position: absolute; top: 5px; right: 5px; display: flex; }
.mdi button { width: 16px; height: 14px; }
.mdi svg { width: 10px; height: 10px; fill: none; stroke: #f2f2f2; }

/* Command line */
.command { display: flex; height: 43px; border-top: 2px solid #707070; }
.handle {
  display: flex;
  flex-direction: column;
  align-items: center;
  width: 17px;
  background: linear-gradient(90deg, #3f3f3f, #686868);
}
.dots {
  width: 15px;
  height: 8px;
  background: radial-gradient(#999 40%, transparent 50%) 0 0 / 3px 3px;
}
.handle button { flex: 1; width: 17px; }
.handle svg { width: 11px; height: 11px; }
.console { flex: 1; background: #fff; }
.history {
  display: flex;
  align-items: center;
  gap: 12px;
  height: 24px;
  padding: 6px 2px 0;
  border-bottom: 1px solid #999;
  background: #c8c8c8;
  color: #111;
  font-family: "DejaVu Sans Mono", "Noto Sans CJK SC", monospace;
  font-size: 10px;
  line-height: 16px;
  white-space: nowrap;
}
.prompt { display: flex; align-items: center; gap: 6px; height: 17px; padding-left: 4px; }
.recent { gap: 3px; color: #777; }
.recent svg { width: 12px; height: 12px; }
.recent .caret { width: 6px; height: 6px; }
.prompt input { flex: 1; font-size: 10px; font-style: italic; line-height: 16px; }
.prompt input::placeholder { color: #999; opacity: 1; }

/* Status bar */
.status {
  position: relative;
  display: flex;
  justify-content: flex-end;
  height: 23px;
  border-top: 1px solid #777;
  background: #393939;
}
.modes { display: flex; height: 22px; border-left: 1px solid #777; background: #4e4e4e; }
.modes button { width: 20px; padding-bottom: 2px; color: #dcdcdc; }
.modes .on { color: #3f8ff0; }
.modes .drop { width: 9px; }
.modes .cell { width: 21px; border-left: 1px solid #686868; }
.modes svg { width: 13px; height: 13px; }
.modes .caret { width: 8px; height: 8px; }
.watermark {
  position: absolute;
  right: 10px;
  top: -4px;
  color: #f0f0f0;
  font-family: "Liberation Sans", "Noto Sans CJK SC", sans-serif;
  font-size: 18px;
  line-height: 26px;
  white-space: nowrap;
  text-shadow: 0 0 1px #444;
}
```
